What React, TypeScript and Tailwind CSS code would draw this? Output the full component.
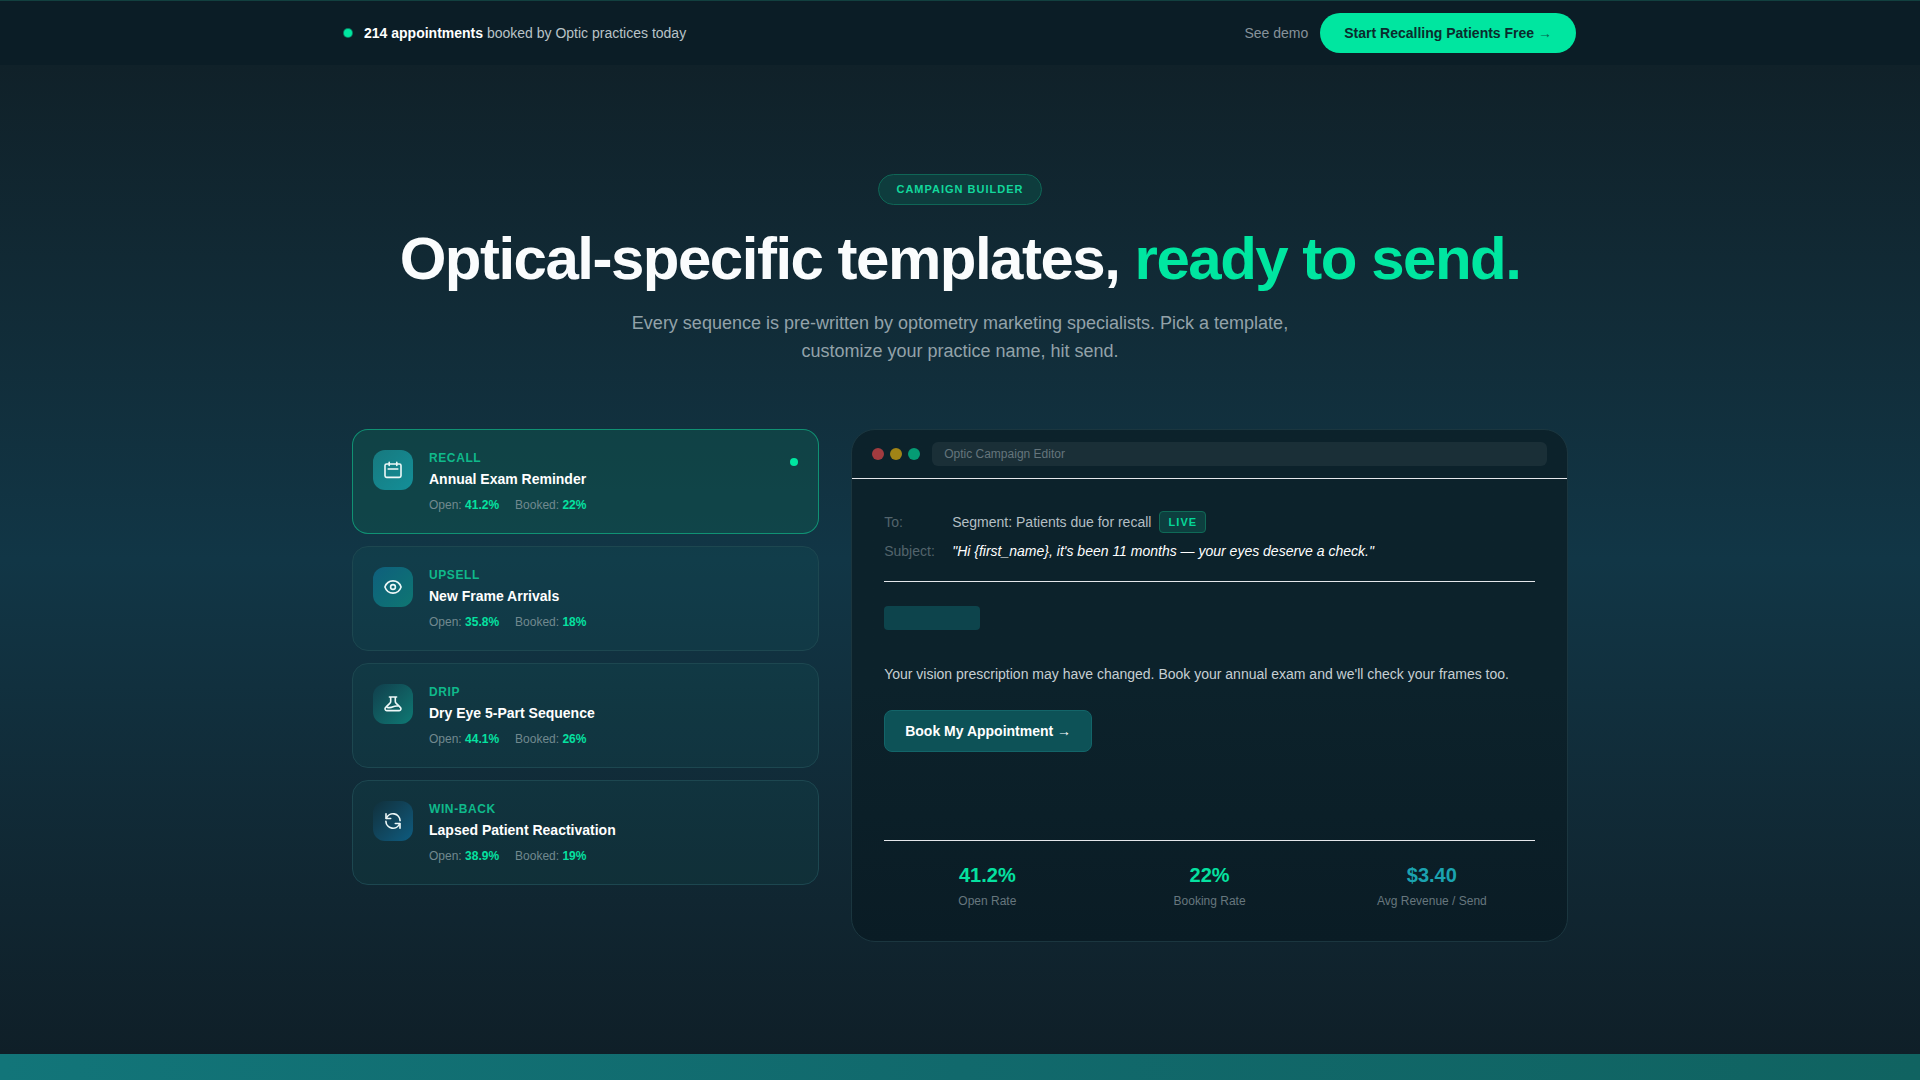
import type { ReactNode } from "react";

type Template = {
  tag: string;
  title: string;
  open: string;
  booked: string;
  iconBg: string;
  icon: ReactNode;
};

const templates: Template[] = [
  {
    tag: "RECALL",
    title: "Annual Exam Reminder",
    open: "41.2%",
    booked: "22%",
    iconBg: "bg-linear-to-br from-[#17797f] to-[#138f98]",
    icon: (
      <>
        <rect x="2" y="4" width="16" height="13.4" rx="1.6" />
        <path d="M6.2 2.400v3M13.800 2.400v3M5.200 9h9.600" />
      </>
    ),
  },
  {
    tag: "UPSELL",
    title: "New Frame Arrivals",
    open: "35.8%",
    booked: "18%",
    iconBg: "bg-linear-to-br from-[#0f5f7c] to-[#0f7672]",
    icon: (
      <>
        <path d="M1.900 10C3.300 6 6.400 3.900 10 3.900S16.700 6 18.100 10C16.700 14 13.600 16.100 10 16.100S3.300 14 1.900 10Z" />
        <circle cx="10" cy="10" r="2.4" />
      </>
    ),
  },
  {
    tag: "DRIP",
    title: "Dry Eye 5-Part Sequence",
    open: "44.1%",
    booked: "26%",
    iconBg: "bg-linear-to-br from-[#103f4c] to-[#0d7a74]",
    icon: (
      <>
        <path d="M6.400 3h7.200M7.700 3v4.600a2 2 0 0 1-.7 1.500L2.700 13.400a1.800 1.800 0 0 0 1.200 3.200h12.200a1.800 1.800 0 0 0 1.200-3.200L13 9.100a2 2 0 0 1-.7-1.500V3" />
        <path d="M4.200 13.400c2.600.6 4.200.2 5.800-.6s3.200-1 4.800-.8" />
      </>
    ),
  },
  {
    tag: "WIN-BACK",
    title: "Lapsed Patient Reactivation",
    open: "38.9%",
    booked: "19%",
    iconBg: "bg-linear-to-br from-[#10303c] to-[#0d5c80]",
    icon: (
      <>
        <path d="M3 2.800v4.700h4.700M17 17.200v-4.700h-4.700" />
        <path d="M3.400 7.300A7.100 7.100 0 0 1 17.100 9.600M16.600 12.700A7.100 7.100 0 0 1 2.900 10.400" />
      </>
    ),
  },
];

const stats = [
  { value: "41.2%", label: "Open Rate", color: "text-[#05e1a0]" },
  { value: "22%", label: "Booking Rate", color: "text-[#05e1a0]" },
  { value: "$3.40", label: "Avg Revenue / Send", color: "text-[#1ba3b0]" },
];

const TopBar = () => (
  <header className="border-t border-[#12403f] bg-[#0b1d26]">
    <div className="mx-auto flex max-w-7xl items-center justify-between px-6 py-3">
      <p className="flex items-center gap-3 text-sm text-[#b9c3c8]">
        <span className="size-2 rounded-full bg-[#00e6a0] ring-1 ring-[#00e6a0]/50" />
        <span>
          <strong className="font-bold text-white">214 appointments</strong> booked by Optic practices today
        </span>
      </p>
      <div className="flex items-center gap-3 text-sm">
        <a href="#demo" className="text-[#86929a]">
          See demo
        </a>
        <button className="rounded-full bg-[#00e6a0] px-6 py-[10px] font-bold text-[#0b2b2d]">
          Start Recalling Patients Free <span className="opacity-70">→</span>
        </button>
      </div>
    </div>
  </header>
);

const TemplateCard = ({ template, active }: { template: Template; active: boolean }) => (
  <button
    className={
      active
        ? "flex w-full items-start gap-4 rounded-2xl border border-[#10a57f]/80 bg-[#0f6452]/35 p-5 text-left"
        : "flex w-full items-start gap-4 rounded-2xl border border-[#1d4750] bg-[#158078]/10 p-5 text-left"
    }
  >
    <span className={`flex size-10 shrink-0 items-center justify-center rounded-xl ${template.iconBg}`}>
      <svg
        viewBox="0 0 20 20"
        className="size-5 text-[#eef8f8]"
        fill="none"
        stroke="currentColor"
        strokeWidth="1.6"
        strokeLinecap="round"
        strokeLinejoin="round"
        aria-hidden="true"
      >
        {template.icon}
      </svg>
    </span>
    <span className="flex-1">
      <span className="block text-xs font-bold tracking-wider text-[#0fb98b]">{template.tag}</span>
      <span className="mt-[3px] block text-sm font-bold text-white">{template.title}</span>
      <span className="mt-2 flex gap-4 text-xs text-[#71898f]">
        <span>
          Open: <b className="text-[#05e1a0]">{template.open}</b>
        </span>
        <span>
          Booked: <b className="text-[#05e1a0]">{template.booked}</b>
        </span>
      </span>
    </span>
    {active && <span className="mt-2 size-2 rounded-full bg-[#00e6a0]" />}
  </button>
);

const CampaignEditor = () => (
  <div className="overflow-hidden rounded-3xl border border-[#1b363f] bg-linear-to-b from-[#0c222b] via-[#0c222b] to-[#0a1c25]">
    {/* window bar */}
    <div className="flex items-center gap-3 border-b border-gray-200 px-5 py-3">
      <div className="flex gap-[6px]">
        <span className="size-3 rounded-full bg-[#a13b3f]" />
        <span className="size-3 rounded-full bg-[#a18416]" />
        <span className="size-3 rounded-full bg-[#059b74]" />
      </div>
      <div className="flex-1 rounded-md bg-white/6 px-3 py-1 text-xs text-[#65757c]">
        Optic Campaign Editor
      </div>
    </div>

    <div className="p-8">
      <div className="flex flex-col gap-2 border-b border-gray-200 pb-5 text-sm">
        <div className="flex items-center gap-3">
          <span className="w-14 text-[#53646c]">To:</span>
          <span className="flex items-center gap-2 text-[#b4bfc4]">
            Segment: Patients due for recall
            <span className="rounded-sm border border-[#0f6a57] bg-[#0d3f3f] px-2 text-[11px] leading-5 font-bold tracking-widest text-[#05d798]">
              LIVE
            </span>
          </span>
        </div>
        <div className="flex items-center gap-3">
          <span className="w-14 text-[#53646c]">Subject:</span>
          <span className="text-white italic">
            "Hi {"{first_name}"}, it's been 11 months — your eyes deserve a check."
          </span>
        </div>
      </div>

      <div className="mt-6 mb-6 min-h-[210px]">
        <div className="h-6 w-24 rounded-sm bg-[#0d444c]" />
        <p className="mt-8 text-sm leading-6 text-[#c6cfd3]">
          Your vision prescription may have changed. Book your annual exam and we'll check your frames too.
        </p>
        <button className="mt-6 rounded-lg border border-[#136569] bg-[#0d5257] px-5 py-[10px] text-sm font-bold text-white">
          Book My Appointment →
        </button>
      </div>

      <div className="grid grid-cols-3 gap-4 border-t border-gray-200 pt-5 text-center">
        {stats.map((stat) => (
          <div key={stat.label}>
            <div className={`text-xl leading-7 font-bold ${stat.color}`}>{stat.value}</div>
            <div className="mt-1 text-xs text-[#67777e]">{stat.label}</div>
          </div>
        ))}
      </div>
    </div>
  </div>
);

export default function App() {
  return (
    <div className="flex min-h-screen flex-col bg-[#0f2028] font-['Liberation_Sans',Arial,sans-serif]">
      <TopBar />

      <section className="bg-linear-to-b from-[#102129] via-[#113646] to-[#0f1f28] pt-[109px] pb-28">
        <div className="mx-auto max-w-7xl px-8">
          <div className="flex flex-col items-center text-center">
            <span className="rounded-full border border-[#0f6656] bg-[#0e3c3d] px-[17px] py-[6px] text-[11px] leading-[17px] font-bold tracking-[1px] text-[#12d79b]">
              CAMPAIGN BUILDER
            </span>
            <h2 className="mt-5 mb-4 text-6xl leading-[68px] font-bold tracking-tight text-[#fafcfd]">
              Optical-specific templates, <span className="text-[#00e6a0]">ready to send.</span>
            </h2>
            <p className="max-w-2xl text-lg text-[#93a2a9]">
              Every sequence is pre-written by optometry marketing specialists. Pick a template, customize your
              practice name, hit send.
            </p>
          </div>

          <div className="mt-16 grid items-start gap-8 lg:grid-cols-5">
            <div className="flex flex-col gap-3 lg:col-span-2">
              {templates.map((template, i) => (
                <TemplateCard key={template.tag} template={template} active={i === 0} />
              ))}
            </div>
            <div className="lg:col-span-3">
              <CampaignEditor />
            </div>
          </div>
        </div>
      </section>

      <div className="min-h-6 flex-1 bg-linear-to-r from-[#127579] via-[#11696c] to-[#106361]" />
    </div>
  );
}
